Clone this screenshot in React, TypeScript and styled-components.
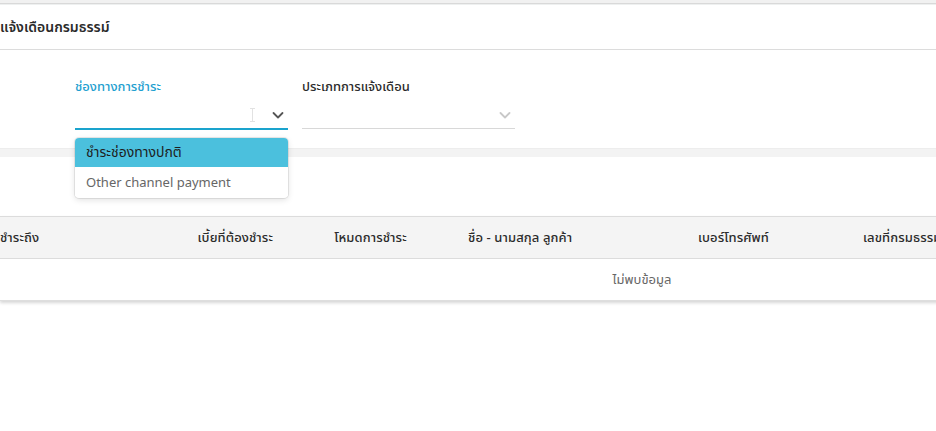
import React from "react";
import styled, { createGlobalStyle } from "styled-components";

const Global = createGlobalStyle`
  html, body { margin: 0; padding: 0; background: #fff; }
  body { font-family: "Noto Sans", "Noto Sans Thai", "DejaVu Sans", sans-serif; color: #333; overflow: hidden; }
  * { box-sizing: border-box; }
`;

const Page = styled.div`
  width: 936px;
  height: 431px;
  overflow: hidden;
  background: #fff;
`;

const TopStrip = styled.div`
  height: 4px;
  background: #f1f1f1;
  border-bottom: 1px solid #d9d9d9;
`;

const CardHeader = styled.div`
  height: 46px;
  display: flex;
  align-items: center;
  border-bottom: 1px solid #dcdcdc;
  border-top: 1px solid #eef0f0;
`;

const Title = styled.h1`
  margin: 0;
  font-size: 14px;
  font-weight: 600;
  color: #2b2b2b;
`;

const Filters = styled.div`
  height: 98px;
  display: flex;
  gap: 14px;
  padding: 26px 0 0 75px;
`;

const Field = styled.div`
  position: relative;
  width: 213px;
  display: flex;
  flex-direction: column;
`;

const Label = styled.label<{ $active?: boolean }>`
  font-size: 13px;
  line-height: 20px;
  font-weight: 500;
  color: ${(p) => (p.$active ? "#1f9fd0" : "#2b2b2b")};
`;

const SelectBox = styled.div<{ $active?: boolean }>`
  height: ${(p) => (p.$active ? "34px" : "33px")};
  display: flex;
  align-items: center;
  justify-content: flex-end;
  gap: 15px;
  padding: 5px 3px 0 0;
  border-bottom: ${(p) => (p.$active ? "2px solid #1aa3cd" : "1px solid #d8d8d8")};
`;

const Chevron = styled.svg<{ $active?: boolean }>`
  width: 14px;
  height: 14px;
  color: ${(p) => (p.$active ? "#555" : "#c8c8c8")};
`;

const Menu = styled.div`
  position: absolute;
  left: 0;
  top: 62px;
  width: 213px;
  background: #fff;
  border-radius: 4px;
  box-shadow: 0 0 0 1px rgba(0, 0, 0, 0.08), 0 2px 6px rgba(0, 0, 0, 0.12);
  overflow: hidden;
  z-index: 5;
  padding-bottom: 2px;
`;

const Option = styled.div<{ $selected?: boolean }>`
  height: 29px;
  display: flex;
  align-items: center;
  padding-left: 11px;
  font-size: ${(p) => (p.$selected ? "14px" : "13px")};
  background: ${(p) => (p.$selected ? "#4bc0dd" : "#fff")};
  color: ${(p) => (p.$selected ? "#1e1e1e" : "#666")};
`;

const Band = styled.div`
  height: 9px;
  background: #f3f3f3;
  border-top: 1px solid #ededed;
`;

const TableSection = styled.div`
  padding-top: 59px;
  overflow: hidden;
  padding-bottom: 6px;
`;

const Table = styled.div`
  width: 1284px;
  box-shadow: 0 2px 3px rgba(0, 0, 0, 0.16);
  border-bottom: 1px solid #dedede;
`;

const HeadRow = styled.div`
  height: 43px;
  display: grid;
  grid-template-columns: 160px 129px 163px 230px 165px 1fr;
  align-items: center;
  background: #f4f4f4;
  border-top: 1px solid #dcdcdc;
  border-bottom: 1px solid #dcdcdc;
`;

const HeadCell = styled.div<{ $align?: "left" | "right" | "center"; $first?: boolean }>`
  font-size: 13px;
  font-weight: 500;
  letter-spacing: 0.1px;
  color: #2b2b2b;
  padding: 0 16px;
  padding-left: ${(p) => (p.$first ? "0" : "16px")};
  text-align: ${(p) => p.$align || "left"};
  white-space: nowrap;
`;

const EmptyRow = styled.div`
  height: 41px;
  display: flex;
  align-items: center;
  justify-content: center;
  font-size: 13px;
  color: #666;
`;

const ChevronIcon = ({ active }: { active?: boolean }) => (
  <Chevron $active={active} viewBox="0 0 14 14" fill="none">
    <path d="M2.5 5l4.5 4.5L11.5 5" stroke="currentColor" strokeWidth="1.8" strokeLinecap="round" strokeLinejoin="round" />
  </Chevron>
);

const Cursor = () => (
  <svg width="7" height="14" viewBox="0 0 7 14" fill="none">
    <path d="M1 0.5h5M3.5 0.5v13M1 13.5h5" stroke="#e2e2e2" strokeWidth="1" />
  </svg>
);

export default function App() {
  return (
    <Page>
      <Global />
      <TopStrip />
      <CardHeader>
        <Title>แจ้งเดือนกรมธรรม์</Title>
      </CardHeader>
      <Filters>
        <Field>
          <Label $active>ช่องทางการชำระ</Label>
          <SelectBox $active>
            <Cursor />
            <ChevronIcon active />
          </SelectBox>
          <Menu>
            <Option $selected>ชำระช่องทางปกติ</Option>
            <Option>Other channel payment</Option>
          </Menu>
        </Field>
        <Field>
          <Label>ประเภทการแจ้งเดือน</Label>
          <SelectBox>
            <ChevronIcon />
          </SelectBox>
        </Field>
      </Filters>
      <Band />
      <TableSection>
        <Table>
          <HeadRow>
            <HeadCell $first>ชำระถึง</HeadCell>
            <HeadCell $align="right">เบี้ยที่ต้องชำระ</HeadCell>
            <HeadCell $align="center">โหมดการชำระ</HeadCell>
            <HeadCell>ชื่อ - นามสกุล ลูกค้า</HeadCell>
            <HeadCell>เบอร์โทรศัพท์</HeadCell>
            <HeadCell>เลขที่กรมธรรม์</HeadCell>
          </HeadRow>
          <EmptyRow>ไม่พบข้อมูล</EmptyRow>
        </Table>
      </TableSection>
    </Page>
  );
}
